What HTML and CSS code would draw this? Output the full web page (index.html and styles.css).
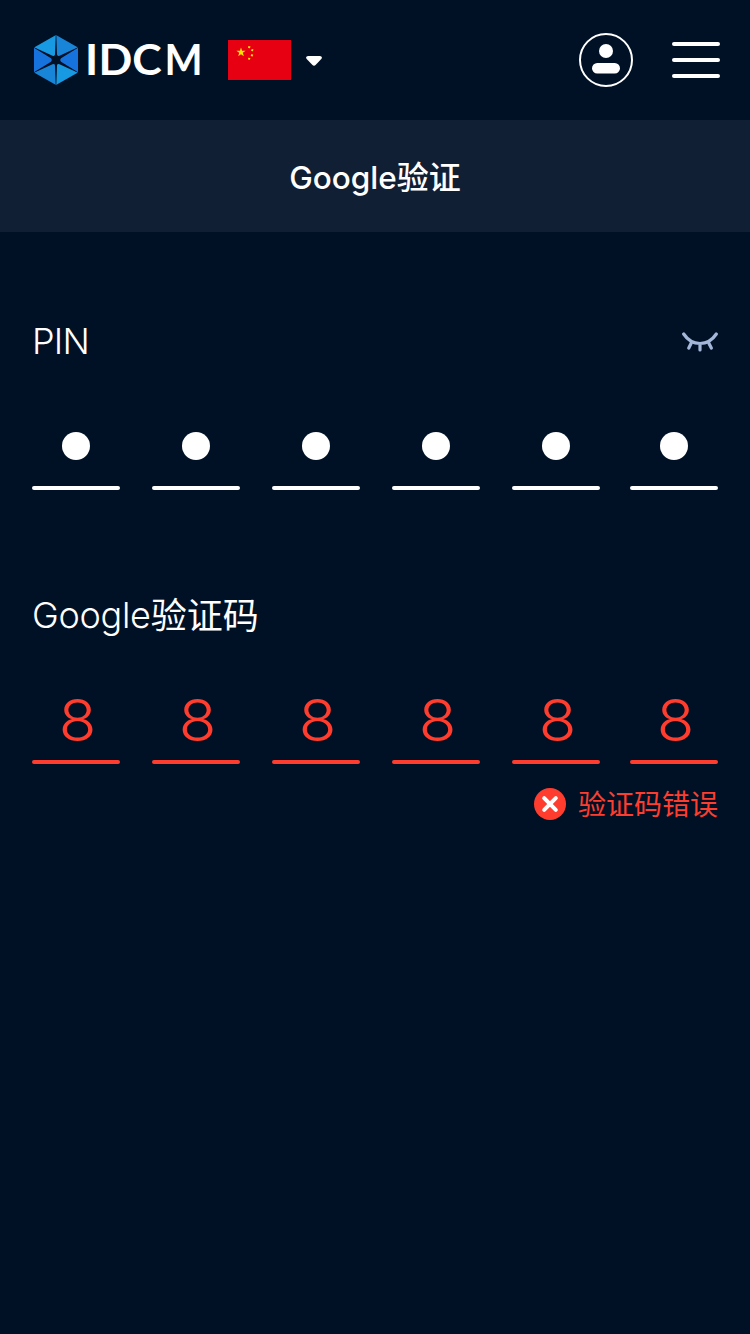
FILE: index.html
```html
<!DOCTYPE html>
<html lang="zh-CN">
<head>
<meta charset="utf-8">
<title>Google验证</title>
<link rel="stylesheet" href="styles.css">
</head>
<body>
<header class="topbar">
  <svg class="logo" viewBox="0 0 172 52" role="img" aria-label="IDCM">
    <path fill="#189ae2" d="M24 26V1L2 13.5Z M24 26V51L46 38.5Z"/>
    <path fill="#1985d8" d="M24 26V1L46 13.5Z M24 26V51L2 38.5Z"/>
    <path fill="#1673de" d="M24 26L2 13.5V38.5Z M24 26L46 13.5V38.5Z"/>
    <path fill="#001126" d="M23.7 1H24.3L25 20.5Q25.3 22.5 27.5 21.7L46 13.3V13.7L29 24.2Q27.2 26 29 27.8L46 38.3V38.7L27.5 30.3Q25.3 29.5 25 31.5L24.3 51H23.7L23 31.5Q22.7 29.5 20.5 30.3L2 38.7V38.3L19 27.8Q20.8 26 19 24.2L2 13.7V13.3L20.5 21.7Q22.7 22.5 23 20.5Z"/>
    <text class="wordmark" y="41" transform="scale(1.06 1)" x="50 62.8 94.6">IDC</text>
    <text class="wordmark" y="41" transform="scale(.96 1)" x="138">M</text>
  </svg>
  <svg class="flag" viewBox="0 0 63 40">
    <path fill="#e60012" d="M0 0H63V40H0Z"/>
    <path fill="#ffe600" d="M13 7.5l1.1 3.2h3.5l-2.8 2.1 1 3.4-2.8-2-2.8 2 1-3.4-2.8-2.1h3.5z"/>
    <path fill="#ffe600" d="M20 6.2l2.4.1-.4 2-1.8-.3zM23.3 9.5l2-.4-.3 2.1-1.8-.2zM23.1 14.2l2.1.4-.5 1.8-1.9-.4zM20.2 17.7l2.2.2-.6 1.8-1.7-.2z"/>
  </svg>
  <svg class="caret" viewBox="0 0 18 12"><path d="M3 1H15Q18 1.5 16.3 4L10.8 9.8Q9 11.6 7.2 9.8L1.7 4Q0 1.5 3 1Z" fill="#fff"/></svg>
  <svg class="account" viewBox="0 0 54 54" fill="#fff">
    <circle cx="27" cy="27" r="26" fill="none" stroke="#fff" stroke-width="2"/>
    <circle cx="27" cy="18" r="7"/><rect x="13" y="30" width="28" height="10.5" rx="5.25"/>
  </svg>
  <div class="menu"><i></i><i></i><i></i></div>
</header>
<h1 class="title"><span class="title-latin">Google</span>验证</h1>
<main class="form">
  <section class="field">
    <div class="field-head">
      <h2 class="label label-pin">PIN</h2>
      <svg class="eye" viewBox="0 0 36 20" fill="none" stroke="#a3b8d8" stroke-width="3.2" stroke-linecap="round"><path d="M1.7 2Q8 11.5 18 11.5T34.3 2M9 11.5L6.8 16M18 12V18M27 11.5L29.3 16"/></svg>
    </div>
    <div class="cells">
      <div class="cell"><b class="dot"></b></div><div class="cell"><b class="dot"></b></div><div class="cell"><b class="dot"></b></div><div class="cell"><b class="dot"></b></div><div class="cell"><b class="dot"></b></div><div class="cell"><b class="dot"></b></div>
    </div>
  </section>
  <section class="field field-error">
    <div class="field-head">
      <h2 class="label"><span class="label-latin">Google</span><span class="label-han">验证码</span></h2>
    </div>
    <div class="cells">
      <div class="cell"><span class="digit">8</span></div><div class="cell"><span class="digit">8</span></div><div class="cell"><span class="digit">8</span></div><div class="cell"><span class="digit">8</span></div><div class="cell"><span class="digit">8</span></div><div class="cell"><span class="digit">8</span></div>
    </div>
    <p class="error">
      <svg class="error-icon" viewBox="0 0 32 32"><circle cx="16" cy="16" r="16" fill="#ff3d2e"/><path d="M10.2 10.2L21.8 21.8M21.8 10.2L10.2 21.8" stroke="#fff" stroke-width="4" stroke-linecap="round"/></svg>
      <span>验证码错误</span>
    </p>
  </section>
</main>
</body>
</html>
```
FILE: styles.css
```css
* { box-sizing: border-box; margin: 0; }
body {
  min-height: 1334px;
  background: #001126;
  color: #fff;
  font-family: Inter, "Noto Sans CJK SC", sans-serif;
}
svg { display: block; flex: none; }
.topbar { display: flex; align-items: center; height: 120px; padding: 0 30px 0 32px; }
.logo { width: 172px; height: 52px; }
.wordmark { font: 700 42px Lato, sans-serif; fill: #fff; }
.flag { width: 63px; height: 40px; margin-left: 24px; }
.caret { width: 18px; height: 12px; margin: 2px 0 0 14px; }
.account { width: 54px; height: 54px; margin-left: auto; }
.menu { display: flex; flex-direction: column; gap: 12px; width: 48px; margin-left: 39px; }
.menu i { height: 4px; border-radius: 2px; background: #fff; }
.title {
  height: 112px;
  background: #111f34;
  font-size: 32px;
  font-weight: 500;
  line-height: 116px;
  text-align: center;
}
.title-latin { font-size: 31.5px; letter-spacing: 0; }
.form { padding: 84px 32px 0; }
.field-head { display: flex; align-items: center; justify-content: space-between; height: 50px; }
.label { font-size: 36px; font-weight: 300; line-height: 50px; }
.label-latin { letter-spacing: -0.3px; }
.label-han { font-weight: 400; }
.label-pin { letter-spacing: -0.8px; }
.eye { width: 36px; height: 20px; margin-top: 2px; }
.cells { display: flex; gap: 32px; margin-top: 36px; }
.cell {
  display: flex;
  align-items: center;
  justify-content: center;
  width: 88px;
  height: 88px;
  font-size: 57px;
  font-weight: 300;
  position: relative;
}
.cell::after {
  content: "";
  position: absolute;
  inset: auto 0 0;
  height: 4px;
  border-radius: 2px;
  background: currentColor;
}
.cell:last-child { margin-left: -2px; }
.digit { padding-left: 2px; transform: scaleX(1.08); }
.dot { width: 28px; height: 28px; border-radius: 50%; background: #fff; }
.field-error { margin-top: 100px; }
.field-error .cells { color: #ff3d2e; }
.label-han { position: relative; top: 1px; }
.error {
  display: flex;
  align-items: center;
  justify-content: flex-end;
  gap: 12px;
  height: 40px;
  margin-top: 20px;
  color: #ff3d2e;
  font-size: 28px;
  line-height: 40px;
}
.error span { padding-top: 2px; }
.error-icon { width: 32px; height: 32px; }
```
